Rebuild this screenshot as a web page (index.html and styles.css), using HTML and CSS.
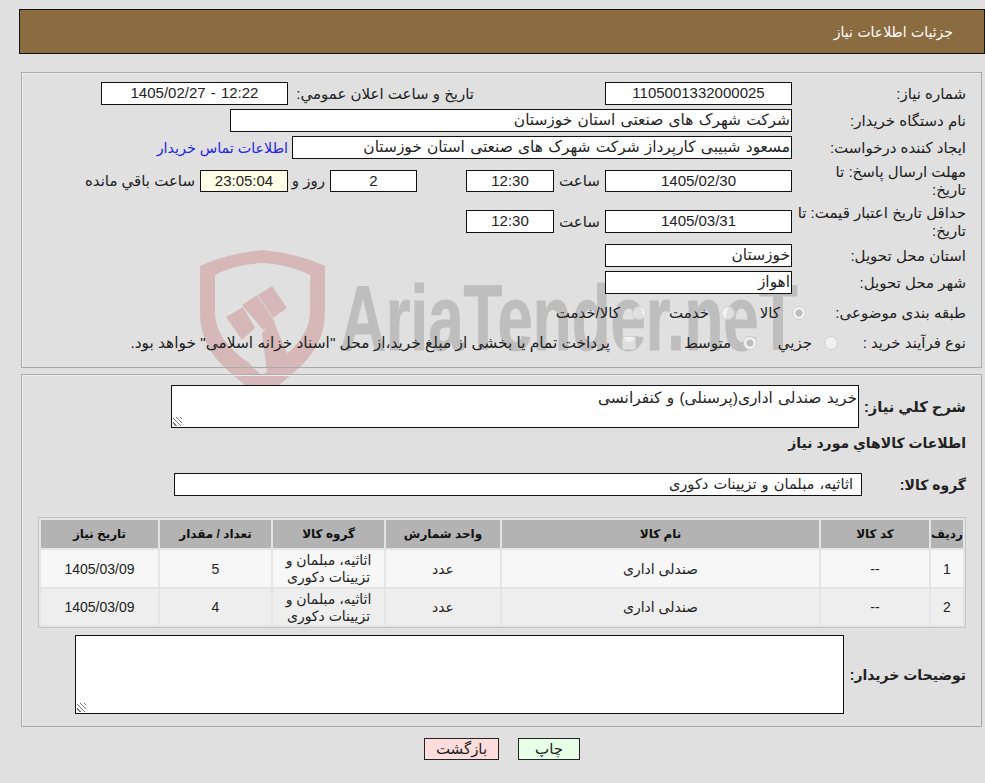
FILE: index.html
```html
<!DOCTYPE html>
<html lang="fa" dir="rtl">
<head>
    <meta charset="UTF-8">
    <title>جزئیات اطلاعات نیاز</title>
    <link rel="stylesheet" href="styles.css">
</head>
<body>
    <div class="watermark" dir="ltr">
        <svg class="shield" width="126" height="140" viewBox="0 0 126 140">
            <path d="M62 0 C85 2 108 8 125 16 V62 C125 88 112 108 92 124 L62 150 L32 124 C12 108 0 88 0 62 V16 C17 8 40 2 62 0 Z M62 13 C45 14 28 18 15 25 V62 C15 78 24 96 48 112 L62 126 L76 112 C100 96 110 78 110 62 V25 C96 18 80 14 62 13 Z" fill="#d6b8b9" fill-rule="evenodd"/>
            <path d="M26 67 L43 57 L55 78 L42 90 Z M42 55 L57 45 L75 72 L63 80 Z M58 45 L72 36 L87 58 L73 68 Z M62 83 L73 70 L93 117 L67 122 Z" fill="#d6b8b9"/>
        </svg>
        <span class="wm-text">AriaTender.neT</span>
    </div>

    <div class="page-title">جزئیات اطلاعات نیاز</div>

    <div class="panel top-panel">
        <div class="row h27">
            <label class="lbl">شماره نیاز:</label>
            <div class="box w-date center">1105001332000025</div>
            <label class="lbl-announce">تاریخ و ساعت اعلان عمومي:</label>
            <div class="box w-date center" dir="ltr">1405/02/27 - 12:22</div>
        </div>
        <div class="row h27">
            <label class="lbl">نام دستگاه خریدار:</label>
            <div class="box w-buyer">شرکت شهرک های صنعتی استان خوزستان</div>
        </div>
        <div class="row h27">
            <label class="lbl">ایجاد کننده درخواست:</label>
            <div class="box w-creator">مسعود شبیبی کارپرداز شرکت شهرک های صنعتی استان خوزستان</div>
            <a class="contact" href="#">اطلاعات تماس خریدار</a>
        </div>
        <div class="row deadline-row">
            <label class="lbl">مهلت ارسال پاسخ: تا<br>تاریخ:</label>
            <div class="box w-date center">1405/02/30</div>
            <span class="txt-hour">ساعت</span>
            <div class="box w-time center">12:30</div>
            <div class="box w-days center">2</div>
            <span class="txt-day">روز و</span>
            <div class="box timer center">23:05:04</div>
            <span class="txt-left">ساعت باقي مانده</span>
        </div>
        <div class="row validity-row">
            <label class="lbl">حداقل تاریخ اعتبار قیمت: تا<br>تاریخ:</label>
            <div class="box w-date center">1405/03/31</div>
            <span class="txt-hour">ساعت</span>
            <div class="box w-time center">12:30</div>
        </div>
        <div class="row h27">
            <label class="lbl">استان محل تحویل:</label>
            <div class="box w-date">خوزستان</div>
        </div>
        <div class="row h27">
            <label class="lbl">شهر محل تحویل:</label>
            <div class="box w-date">اهواز</div>
        </div>
        <div class="row subject-row">
            <label class="lbl lbl-subject">طبقه بندی موضوعی:</label>
            <span class="radio on"></span><span class="opt o1">کالا</span>
            <span class="radio"></span><span class="opt o2">خدمت</span>
            <span class="radio"></span><span class="opt">کالا/خدمت</span>
        </div>
        <div class="row process-row">
            <label class="lbl lbl-process">نوع فرآیند خرید :</label>
            <span class="radio"></span><span class="opt o3">جزیي</span>
            <span class="radio on"></span><span class="opt o4">متوسط</span>
            <span class="check"></span><span class="opt opt-long">پرداخت تمام یا بخشی از مبلغ خرید،از محل "اسناد خزانه اسلامی" خواهد بود.</span>
        </div>
    </div>

    <div class="panel bottom-panel">
        <div class="row desc-row">
            <label class="lbl-bold">شرح کلي نیاز:</label>
            <div class="box area desc">خرید صندلی اداری(پرسنلی) و کنفرانسی<span class="grip"></span></div>
        </div>
        <div class="section-title">اطلاعات کالاهاي مورد نیاز</div>
        <div class="row group-row">
            <label class="lbl-group">گروه کالا:</label>
            <div class="box w-group">اثاثیه، مبلمان و تزیینات دکوری</div>
        </div>
        <table class="items">
            <thead>
                <tr>
                    <th class="c-row">ردیف</th>
                    <th class="c-code">کد کالا</th>
                    <th class="c-name">نام کالا</th>
                    <th class="c-unit">واحد شمارش</th>
                    <th class="c-group">گروه کالا</th>
                    <th class="c-qty">تعداد / مقدار</th>
                    <th class="c-date">تاریخ نیاز</th>
                </tr>
            </thead>
            <tbody>
                <tr>
                    <td>1</td>
                    <td>--</td>
                    <td>صندلی اداری</td>
                    <td>عدد</td>
                    <td>اثاثیه، مبلمان و تزیینات دکوری</td>
                    <td>5</td>
                    <td>1405/03/09</td>
                </tr>
                <tr>
                    <td>2</td>
                    <td>--</td>
                    <td>صندلی اداری</td>
                    <td>عدد</td>
                    <td>اثاثیه، مبلمان و تزیینات دکوری</td>
                    <td>4</td>
                    <td>1405/03/09</td>
                </tr>
            </tbody>
        </table>
        <div class="row notes-row">
            <label class="lbl-notes">توضیحات خریدار:</label>
            <div class="box area notes"><span class="grip"></span></div>
        </div>
    </div>

    <div class="actions">
        <button class="btn btn-print">چاپ</button>
        <button class="btn btn-back">بازگشت</button>
    </div>
</body>
</html>
```

FILE: styles.css
```css
body {
    position: relative;
    margin: 0;
    height: 783px;
    overflow: hidden;
    background-color: #e0e0e0;
    font-family: "Liberation Sans", "DejaVu Sans", sans-serif;
    font-size: 15px;
    color: #222;
}
.watermark {
    position: absolute;
    left: 200px;
    top: 250px;
    width: 620px;
    height: 140px;
}
.shield {
    position: absolute;
    left: 0;
    top: 0;
}
.wm-text {
    position: absolute;
    left: 140px;
    top: 18px;
    font-family: "Liberation Sans", sans-serif;
    font-weight: bold;
    font-size: 92px;
    line-height: 100px;
    color: #bebebe;
    -webkit-text-stroke: 1px #bebebe;
    white-space: nowrap;
    transform-origin: left center;
    transform: scaleX(0.69);
}
.page-title {
    position: relative;
    box-sizing: border-box;
    height: 45px;
    margin: 9px 0 0 19px;
    padding: 0 31px;
    line-height: 44px;
    font-size: 14px;
    font-family: "DejaVu Sans", sans-serif;
    background-color: #8b6b40;
    border: 1px solid #111;
    color: #fff;
}
.panel {
    position: relative;
    box-sizing: border-box;
    margin: 0 3px 0 21px;
    border: 1px solid #aaa;
    box-shadow: inset 1px 1px 0 #eee;
}
.top-panel {
    height: 296px;
    margin-top: 18px;
    padding-top: 7px;
}
.bottom-panel {
    height: 353px;
    margin-top: 6px;
    padding-top: 10px;
}
.row {
    display: flex;
    align-items: center;
}
.h27 { height: 27px; }
.deadline-row { height: 40px; }
.deadline-row .box { height: 22px; line-height: 19px; }
.validity-row { height: 41px; }
.subject-row { height: 34px; }
.process-row { height: 26px; }
.lbl {
    box-sizing: border-box;
    flex: none;
    width: 189px;
    padding-right: 15px;
    line-height: 18px;
    white-space: nowrap;
}
.lbl-subject { width: 175px; }
.lbl-process { width: 143px; }
.box {
    box-sizing: border-box;
    flex: none;
    height: 23px;
    padding: 0 1px;
    line-height: 20px;
    font-size: 15.4px;
    word-spacing: 1px;
    background-color: #fff;
    border: 1px solid #111;
    white-space: nowrap;
    overflow: hidden;
}
.center { text-align: center; font-size: 15px; }
.w-date { width: 187px; }
.w-time { width: 88px; }
.w-days { width: 87px; margin-right: 49px; }
.w-buyer { width: 562px; }
.w-creator { width: 500px; }
.timer { width: 88px; background-color: #ffffe8; }
.lbl-announce {
    width: 181px;
    margin: 0 131px 0 5px;
    white-space: nowrap;
}
.contact {
    margin-right: 4px;
    font-size: 14.3px;
    color: #2222ee;
    text-decoration: none;
    white-space: nowrap;
}
.txt-hour { width: 41px; margin: 0 5px; white-space: nowrap; text-align: center; }
.txt-day { width: 32px; margin: 0 5px; white-space: nowrap; }
.txt-left { margin-right: 5px; white-space: nowrap; }
.radio {
    flex: none;
    box-sizing: border-box;
    width: 14px;
    height: 14px;
    border-radius: 50%;
    background-color: rgba(255, 255, 255, 0.5);
    border: 1px solid #d0d0d0;
}
.radio.on { background: radial-gradient(circle, #bdbdbd 0 3px, #f1f1f1 4px); }
.check {
    flex: none;
    box-sizing: border-box;
    width: 14px;
    height: 14px;
    border-radius: 2px;
    background-color: rgba(255, 255, 255, 0.5);
    border: 1px solid #d0d0d0;
}
.opt { margin-right: 12px; white-space: nowrap; }
.opt-long { font-size: 15.4px; }
.o1 { width: 45px; }
.o2 { width: 63px; }
.o3 { width: 55px; }
.o4 { width: 95px; }
.lbl-bold, .lbl-group, .lbl-notes, .section-title {
    font-weight: bold;
    font-size: 14px;
    white-space: nowrap;
}
.lbl-bold { flex: none; width: 122px; padding-right: 15px; box-sizing: border-box; font-size: 14.7px; }
.area { position: relative; white-space: normal; }
.desc { width: 688px; height: 43px; padding: 2px 1px; }
.desc-row { height: 43px; }
.grip {
    position: absolute;
    left: 1px;
    bottom: 1px;
    width: 9px;
    height: 9px;
    background: repeating-linear-gradient(45deg, transparent 0 2px, #777 2px 3px);
}
.section-title {
    box-sizing: border-box;
    height: 40px;
    padding: 3px 15px 0 0;
    line-height: 24px;
}
.group-row { height: 23px; margin-top: 5px; }
.lbl-group { flex: none; width: 119px; padding-right: 15px; box-sizing: border-box; }
.w-group { width: 688px; padding: 0 8px; font-size: 14.6px; }
.items {
    box-sizing: border-box;
    width: 928px;
    margin: 21px 15px 0 0;
    border: 1px solid #c4c4c4;
    border-collapse: separate;
    border-spacing: 2px;
    background-color: #e4e4e4;
    table-layout: fixed;
    font-size: 14px;
}
.items th {
    height: 28px;
    padding: 0;
    background-color: #b3b3b3;
    font-size: 12px;
    color: #111;
}
.items td {
    height: 36px;
    padding: 1px 0 0;
    text-align: center;
    line-height: 17px;
    background-color: #f7f7f7;
}
.items tbody tr:nth-child(2) td { height: 35px; background-color: #eeeeee; }
.c-row { width: 32px; }
.c-code { width: 108px; }
.c-name { width: 317px; }
.c-unit { width: 114px; }
.c-group { width: 111px; }
.c-qty { width: 111px; }
.c-date { width: 117px; }
.notes-row { margin-top: 7px; height: 79px; }
.lbl-notes { flex: none; width: 137px; padding-right: 15px; box-sizing: border-box; }
.notes { width: 769px; height: 79px; }
.actions {
    position: relative;
    display: flex;
    justify-content: center;
    gap: 19px;
    margin-top: 11px;
    padding-left: 19px;
}
.btn {
    box-sizing: border-box;
    height: 22px;
    padding: 0;
    border: 1px solid #222;
    font-family: "Liberation Sans", "DejaVu Sans", sans-serif;
    font-size: 15px;
    color: #222;
}
.btn-back { width: 75px; background-color: #ffdddd; }
.btn-print { width: 62px; background-color: #e6ffe6; }
```
